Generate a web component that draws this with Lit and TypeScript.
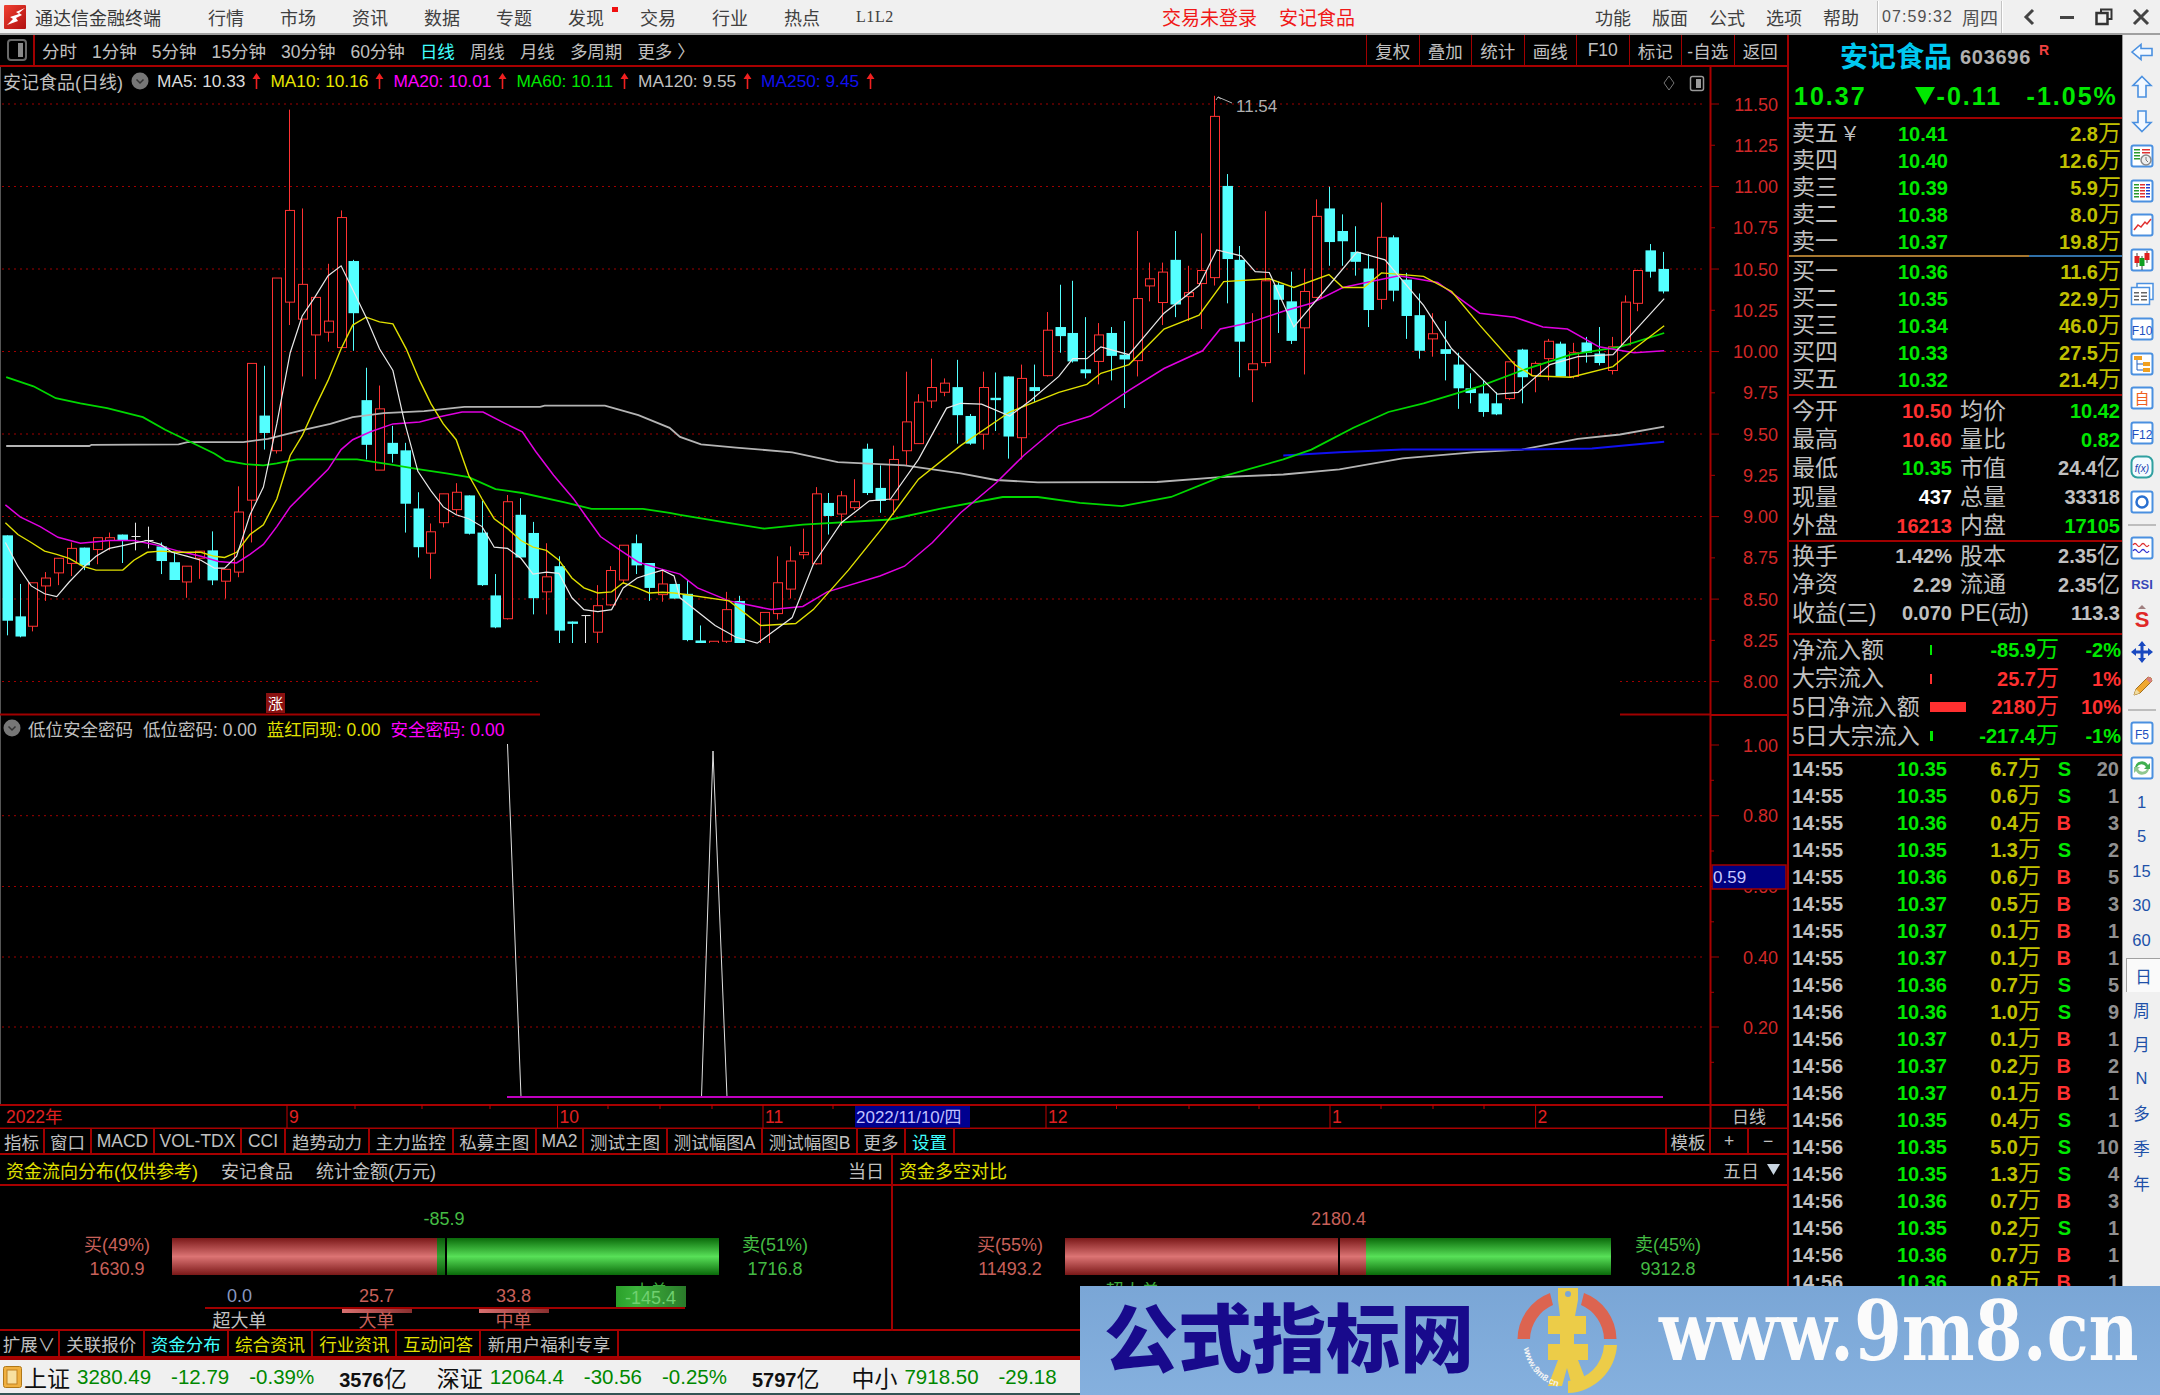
import { LitElement, html, css, svg } from "lit";
import { customElement } from "lit/decorators.js";

type C = [string, number, number, number, number];
const CANDLES: C[] = [
["c",1152,1368,1152,1405],["c",1357,1408,1275,1410],["r",1272,1382,1272,1395],["r",1260,1280,1245,1318],["r",1210,1247,1210,1278],
["r",1185,1223,1170,1255],["c",1183,1228,1183,1240],["r",1158,1188,1158,1225],["r",1158,1165,1145,1190],["c",1150,1165,1150,1222],
["w",1155,1155,1120,1190],["w",1165,1165,1130,1185],["c",1180,1217,1170,1250],["c",1220,1265,1195,1265],["r",1230,1270,1230,1310],
["r",1192,1210,1192,1262],["c",1190,1266,1142,1278],["r",1238,1268,1238,1312],["r",1093,1245,1028,1258],["r",717,1063,717,1170],
["c",849,893,723,935],["r",501,938,501,945],["r",330,562,75,620],["r",517,605,325,750],["r",550,645,550,757],
["r",610,638,465,662],["r",348,677,330,677],["c",458,590,455,685],["c",810,923,728,960],["r",832,987,773,987],
["c",918,946,875,968],["c",937,1072,918,1145],["c",1084,1182,1043,1208],["r",1143,1197,1122,1262],["r",1047,1120,1047,1132],
["r",1043,1087,1020,1100],["c",1051,1148,1051,1150],["c",1145,1278,1065,1280],["c",1304,1385,1250,1387],["r",1067,1363,1050,1365],
["c",1100,1208,1058,1208],["c",1146,1311,1118,1352],["r",1257,1295,1172,1352],["c",1230,1393,1205,1425],["c",1370,1376,1370,1425],
["w",1355,1355,1355,1425],["r",1330,1397,1278,1425],["r",1241,1328,1230,1330],["r",1177,1265,1177,1275],["c",1172,1228,1150,1250],
["c",1222,1285,1222,1318],["r",1275,1302,1240,1320],["c",1275,1312,1275,1312],["c",1300,1417,1265,1420],["c",1418,1440,1380,1440],
["r",1420,1440,1420,1440],["r",1340,1420,1295,1430],["c",1318,1440,1305,1440],["r",1430,1440,1430,1440],["r",1347,1440,1347,1440],
["r",1272,1350,1205,1365],["r",1217,1288,1180,1312],["r",1195,1201,1135,1212],["r",1047,1224,1030,1226],["c",1070,1103,1045,1150],
["r",1052,1098,1040,1128],["r",1067,1082,1010,1088],["c",933,1045,920,1050],["c",1032,1065,975,1095],["r",960,1062,925,1100],
["r",865,938,738,975],["r",815,920,795,920],["r",778,812,705,830],["r",767,790,755,800],["c",777,848,708,920],
["c",850,920,845,923],["r",778,896,738,935],["c",804,810,740,888],["c",750,902,750,958],["r",755,905,720,960],
["c",777,787,720,815],["r",633,748,587,750],["c",625,648,518,690],["c",640,712,508,715],["c",732,742,600,755],
["r",645,712,615,770],["c",640,698,625,760],["c",695,707,610,830],["r",553,710,382,750],["r",503,521,462,560],
["r",486,563,462,620],["c",455,568,382,600],["r",538,548,470,610],["r",482,515,388,630],["r",92,500,40,520],
["c",268,453,238,565],["c",455,662,420,752],["r",718,733,590,815],["r",508,715,332,725],["c",518,556,510,640],
["c",560,660,485,668],["r",535,627,478,745],["r",345,550,302,552],["c",325,410,270,470],["c",382,408,340,470],
["c",435,460,370,495],["c",477,582,440,625],["r",398,555,310,580],["c",398,533,393,560],["c",505,597,488,655],
["c",595,685,540,705],["r",642,655,590,700],["c",681,693,610,760],["c",720,780,690,832],["c",780,792,742,818],
["c",793,840,760,852],["c",818,846,790,848],["r",713,806,713,810],["c",682,752,680,818],["r",717,748,712,790],
["r",661,705,655,760],["c",667,750,662,750],["r",690,750,665,755],["c",664,690,650,715],["c",692,716,625,722],
["r",675,735,650,745],["r",562,670,545,670],["r",482,565,480,585],["c",431,485,415,500],["c",478,535,435,540],
];

const Y = (z: number) => 80 + z / 2.53;
const X = (i: number) => 6.7 + 12.84 * i;
const mk = (a: number[][], b: number[][]) =>
  [...a.filter((p) => p[0] / 2.24 < 680).map((p) => [p[0] / 2.24, Y(p[1])]), ...b.map((p) => [680 + p[0] / 1.4255, Y(p[1])])]
    .map((p) => `${p[0].toFixed(1)},${p[1].toFixed(1)}`)
    .join(" ");

const MA5 = mk(
  [[12,1170],[40,1230],[70,1280],[100,1300],[127,1307],[155,1270],[185,1235],[215,1205],[245,1185],[275,1178],[300,1172],[330,1165],[360,1175],[385,1195],[420,1205],[450,1215],[480,1235],[503,1235],[530,1205],[560,1100],[590,1030],[620,870],[650,690],[677,597],[705,550],[735,495],[764,470],[790,530],[820,600],[850,680],[880,735],[905,860],[936,990],[966,1040],[993,1080],[1022,1100],[1050,1110],[1080,1130],[1107,1182],[1137,1185],[1167,1210],[1194,1250],[1224,1245],[1252,1248],[1281,1310],[1308,1340],[1339,1345],[1370,1340],[1396,1285],[1427,1260],[1454,1250],[1484,1240],[1510,1255]],
  [[0,1310],[50,1380],[80,1410],[110,1425],[160,1360],[190,1225],[230,1120],[270,1065],[300,1060],[340,960],[380,830],[400,818],[430,820],[470,850],[500,810],[540,750],[560,705],[580,705],[600,675],[640,695],[690,590],[740,520],[765,430],[800,445],[820,485],[840,487],[875,625],[925,520],[965,435],[1005,455],[1060,570],[1100,680],[1165,795],[1195,790],[1240,720],[1280,700],[1330,695],[1403,553]]
);
const MA10 = mk(
  [[12,1120],[40,1150],[70,1170],[100,1192],[127,1200],[155,1210],[185,1230],[215,1240],[245,1240],[275,1240],[300,1215],[330,1195],[360,1192],[400,1195],[450,1195],[480,1205],[503,1208],[530,1195],[560,1150],[590,1125],[620,1060],[650,950],[677,900],[705,830],[735,760],[764,680],[790,620],[820,600],[850,612],[880,617],[910,680],[940,760],[966,820],[993,870],[1022,910],[1050,1000],[1080,1060],[1107,1110],[1137,1135],[1167,1165],[1194,1182],[1224,1190],[1252,1215],[1281,1260],[1308,1285],[1339,1298],[1370,1295],[1396,1272],[1427,1285],[1454,1298],[1484,1296],[1510,1298]],
  [[0,1300],[70,1318],[115,1380],[165,1375],[190,1340],[240,1240],[290,1130],[340,1010],[400,925],[470,840],[540,790],[580,770],[600,742],[640,720],[690,630],[740,595],[775,510],[840,503],[875,525],[925,492],[945,525],[975,525],[1000,488],[1060,497],[1100,535],[1140,620],[1190,720],[1215,748],[1270,752],[1330,725],[1360,680],[1403,622]]
);
const MA20 = mk(
  [[12,1075],[45,1105],[90,1130],[130,1157],[180,1172],[245,1165],[300,1165],[345,1175],[400,1192],[450,1205],[490,1218],[530,1222],[560,1200],[590,1175],[620,1130],[650,1080],[690,1035],[735,985],[764,935],[790,910],[830,890],[880,870],[940,865],[985,852],[1035,840],[1082,840],[1130,868],[1170,890],[1200,940],[1240,1000],[1285,1060],[1310,1100],[1345,1155],[1390,1190],[1430,1220],[1480,1237]],
  [[0,1250],[25,1285],[70,1318],[130,1340],[175,1332],[210,1295],[285,1255],[320,1230],[360,1170],[400,1095],[450,1020],[490,950],[540,875],[585,850],[640,785],[690,730],[745,685],[770,630],[810,615],[860,585],[900,565],[945,525],[985,510],[1025,495],[1080,512],[1140,590],[1190,600],[1230,625],[1265,630],[1310,675],[1360,690],[1403,685]]
);
const MA60 = mk(
  [[14,752],[75,775],[125,805],[180,818],[240,830],[320,853],[370,885],[420,912],[480,945],[505,963],[550,972],[590,975],[620,970],[665,960],[800,960],[870,972],[940,985],[1000,995],[1050,1005],[1110,1035],[1170,1045],[1270,1070],[1325,1085],[1440,1085],[1500,1095]],
  [[0,1100],[60,1118],[120,1135],[175,1125],[300,1112],[370,1085],[460,1055],[510,1055],[570,1070],[630,1078],[700,1055],[770,1005],[860,960],[900,935],[960,880],[1010,840],[1060,818],[1140,775],[1200,735],[1270,695],[1340,675],[1403,640]]
);
const MA120 = mk(
  [[14,926],[200,926],[205,923],[400,922],[420,916],[545,916],[600,908],[680,885],[740,870],[790,853],[860,843],[950,838],[1040,827],[1210,827],[1220,824],[1355,824],[1430,848],[1500,880]],
  [[0,903],[30,922],[80,930],[160,942],[225,967],[320,975],[400,995],[450,1012],[510,1018],[680,1017],[770,1005],[860,998],[940,985],[1030,957],[1130,942],[1200,935],[1280,908],[1340,897],[1403,877]]
);
const MA250 = mk([], [[860,950],[940,942],[1030,935],[1190,935],[1300,932],[1403,915]]);

const PRICE_TICKS = ["11.50","11.25","11.00","10.75","10.50","10.25","10.00","9.75","9.50","9.25","9.00","8.75","8.50","8.25","8.00"];
const SUB_TICKS = ["1.00","0.80","0.60","0.40","0.20"];
const DATE_MARKS: [number, string][] = [[287,"9"],[557.5,"10"],[763,"11"],[1046,"12"],[1330,"1"],[1535.6,"2"]];
const DATE_TICKS = [355,422,490,608,660,712,833,1116.5,1189,1259,1381,1433,1484];

const PERIODS = ["分时","1分钟","5分钟","15分钟","30分钟","60分钟","日线","周线","月线","多周期","更多 〉"];
const TOOLS = ["复权","叠加","统计","画线","F10","标记","-自选","返回"];
const MAS: [string, string][] = [["MA5: 10.33","ma-w"],["MA10: 10.16","ma-y"],["MA20: 10.01","ma-m"],["MA60: 10.11","ma-g"],["MA120: 9.55","ma-s"],["MA250: 9.45","ma-b"]];
const TABS1: [string, number, string?][] = [["指标",45],["窗口",47],["MACD",63],["VOL-TDX",87],["CCI",44],["趋势动力",84],["主力监控",83.5],["私募主图",83.5],["MA2",47],["测试主图",84],["测试幅图A",95],["测试幅图B",95],["更多",48],["设置",49,"cy"]];
const TABS2: [string, number, string?][] = [["扩展∨",60],["关联报价",84.7],["资金分布",84,"cy"],["综合资讯",84.5,"ye"],["行业资讯",84,"ye"],["互动问答",83.5,"ye"],["新用户福利专享",138.5]];
const ASKS: [string, string, string][] = [["卖五","10.41","2.8"],["卖四","10.40","12.6"],["卖三","10.39","5.9"],["卖二","10.38","8.0"],["卖一","10.37","19.8"]];
const BIDS: [string, string, string][] = [["买一","10.36","11.6"],["买二","10.35","22.9"],["买三","10.34","46.0"],["买四","10.33","27.5"],["买五","10.32","21.4"]];
type S = [string, string, string, string, string, string, string?];
const STATS1: S[] = [
  ["今开","10.50","re","均价","10.42","gr"],["最高","10.60","re","量比","0.82","gr"],["最低","10.35","gr","市值","24.4","gy","亿"],
  ["现量","437","wh","总量","33318","gy"],["外盘","16213","re","内盘","17105","gr"],
];
const STATS2: S[] = [["换手","1.42%","gy","股本","2.35","gy","亿"],["净资","2.29","gy","流通","2.35","gy","亿"],["收益(三)","0.070","gy","PE(动)","113.3","gy"]];
const FLOWS: [string, number, string, string, string][] = [["净流入额",2,"-85.9","-2%","gr"],["大宗流入",2,"25.7","1%","re"],["5日净流入额",36,"2180","10%","re"],["5日大宗流入",3,"-217.4","-1%","gr"]];
const TRADES = `14:55 10.35 6.7 S 20|14:55 10.35 0.6 S 1|14:55 10.36 0.4 B 3|14:55 10.35 1.3 S 2|14:55 10.36 0.6 B 5|14:55 10.37 0.5 B 3|14:55 10.37 0.1 B 1|14:55 10.37 0.1 B 1|14:56 10.36 0.7 S 5|14:56 10.36 1.0 S 9|14:56 10.37 0.1 B 1|14:56 10.37 0.2 B 2|14:56 10.37 0.1 B 1|14:56 10.35 0.4 S 1|14:56 10.35 5.0 S 10|14:56 10.35 1.3 S 4|14:56 10.36 0.7 B 3|14:56 10.35 0.2 S 1|14:56 10.36 0.7 B 1|14:56 10.36 0.8 B 1`.split("|").map((s) => s.split(" "));

const BLUE = "#4a90e0";
const box = (inner: unknown) => svg`<rect x="1.5" y="1.5" width="21" height="21" rx="2" fill="#fff" stroke=${BLUE} stroke-width="2"></rect>${inner}`;
const bars = (x: number, ys: number[], c: string, w = 5) => ys.map((y) => svg`<rect x=${x} y=${y} width=${w} height="1.5" fill=${c}></rect>`);
const ICONS: unknown[] = [
  svg`<path d="M2 12 L11 4.500 V8.500 H22 V15.500 H11 V19.500 Z" fill="#f4f9ff" stroke=${BLUE} stroke-width="1.600"></path>`,
  svg`<path d="M12 1.500 L21 10.500 H16 V22 H8 V10.500 H3 Z" fill="#f4f9ff" stroke=${BLUE} stroke-width="1.600"></path>`,
  svg`<path d="M12 22.500 L21 13.500 H16 V2 H8 V13.500 H3 Z" fill="#f4f9ff" stroke=${BLUE} stroke-width="1.600"></path>`,
  box(svg`${bars(4,[5,8,11,14],"#2a9a2a",6)}${bars(12,[5,8],"#e03030",8)}<circle cx="16" cy="16" r="5" fill="#eee" stroke="#888" stroke-width="1.500"></circle><path d="M16 13v3l2 2" stroke="#777" fill="none"></path>`),
  box(svg`${bars(4,[5,8,11,14,17],"#2a9a2a")}${bars(10,[5,8,11,14,17],"#e03030")}${bars(16,[5,8,11,14,17],"#2040d0",4)}`),
  box(svg`<path d="M4 17 L8 12 L11 14 L15 9 L17 11 L21 6" fill="none" stroke="#e03030" stroke-width="1.500"></path>`),
  box(svg`<path d="M7 5v14M12 8v14M17 3v12" stroke="#444" stroke-width="1"></path><rect x="4.500" y="8" width="5" height="7" fill="#e02020"></rect><rect x="9.500" y="10" width="5" height="8" fill="#10a020"></rect><rect x="14.500" y="5" width="5" height="7" fill="#e02020"></rect>`),
  svg`<rect x="7" y="1.500" width="16" height="16" fill="#fff" stroke=${BLUE} stroke-width="1.500"></rect><rect x="1.500" y="5.500" width="18" height="17" fill="#fff" stroke=${BLUE} stroke-width="1.500"></rect>${bars(4,[10,13.500,17],"#666",5)}${bars(11,[10,13.500,17],"#666",6)}`,
  box(svg`<text class="ic-t" x="12" y="17.500" text-anchor="middle" fill="#2050c0">F10</text>`),
  box(svg`<rect x="4" y="4" width="8" height="4" fill="#f0a020"></rect><rect x="13" y="10" width="7" height="4" fill="#f0a020"></rect><rect x="13" y="16" width="7" height="4" fill="#f0a020"></rect><path d="M7 8v10h6M7 12h6" fill="none" stroke="#2060c0"></path>`),
  box(svg`<text class="ic-c" x="12" y="18" text-anchor="middle" fill="#f06020">自</text>`),
  box(svg`<text class="ic-t" x="12" y="17.500" text-anchor="middle" fill="#2050c0">F12</text>`),
  svg`<rect x="1.500" y="1.500" width="21" height="21" rx="6" fill="#f4fbff" stroke="#30a0a0" stroke-width="2"></rect><text class="ic-f" x="12" y="17" text-anchor="middle" fill="#2040b0">f(x)</text>`,
  box(svg`<circle cx="12" cy="12" r="5.500" fill="none" stroke="#2a70d0" stroke-width="2.500"></circle>`),
  null,
  box(svg`<path d="M3 9 q2-3 4 0 t4 0 t4 0 t4 0" fill="none" stroke="#e03030" stroke-width="1.300"></path><path d="M3 15 q2-3 4 0 t4 0 t4 0 t4 0" fill="none" stroke="#3030d0" stroke-width="1.300"></path>`),
  svg`<text class="ic-r" x="12" y="17.500" text-anchor="middle" fill="#3848b8">RSI</text>`,
  svg`<path d="M12 0 L16 4 H8 Z" fill="#a08080"></path><text class="ic-s" x="12" y="22" text-anchor="middle" fill="#e02828">S</text>`,
  svg`<path d="M12 1 L16 6 H13.500 V10.500 H18 V8 L23 12 L18 16 V13.500 H13.500 V18 H16 L12 23 L8 18 H10.500 V13.500 H6 V16 L1 12 L6 8 V10.500 H10.500 V6 H8 Z" fill="#1848c0"></path>`,
  svg`<path d="M4 20 L6 14 L18 2 Q22 2 22 6 L10 18 Z" fill="#f0a830" stroke="#a07020"></path><path d="M4 20 L6 14 L10 18 Z" fill="#f0dca0"></path><path d="M18 2 Q22 2 22 6 L20 8 L16 4 Z" fill="#d88080"></path>`,
  null,
  box(svg`<text class="ic-t" x="12" y="17.500" text-anchor="middle" fill="#2050c0">F5</text>`),
  box(svg`<path d="M5 11 A7 7 0 0 1 18 9 L20 7 V13 H14 L16 11 A5 5 0 0 0 7 11 Z" fill="#40b050"></path><path d="M19 13 A7 7 0 0 1 6 15 L4 17 V11 H10 L8 13 A5 5 0 0 0 17 13 Z" fill="#90c890"></path>`),
];
const NAV = ["1","5","15","30","60","日","周","月","N","多","季","年"];

@customElement("app-root")
export class AppRoot extends LitElement {
  static styles = css`
    :host { display: block; width: 2160px; height: 1395px; overflow: hidden; background: #000; }
    * { box-sizing: border-box; }
    .app { position: relative; width: 2160px; height: 1395px; display: flex; flex-direction: column; font-family: "Liberation Sans", "Noto Sans CJK SC", sans-serif; }
    .top { height: 35px; flex: none; background: #f0f0f0; border-bottom: 2px solid #a0a0a0; display: flex; align-items: center; color: #404040; font-size: 18px; white-space: nowrap; padding-left: 4px; }
    .logo { width: 22px; height: 24px; flex: none; margin-right: 9px; }
    .brand { width: 126px; color: #383838; }
    .menu { display: flex; align-items: center; gap: 36px; margin-left: 47px; }
    .menu span { position: relative; width: 36px; }
    .menu .l12 { font-family: "Liberation Serif", serif; font-size: 16px; letter-spacing: 0.6px; }
    .dot { position: absolute; left: 44px; top: 3px; width: 6px; height: 5px; background: #f01010; }
    .alert { margin-left: 270px; display: flex; gap: 22px; color: #f01818; font-size: 19px; }
    .sys { margin-left: auto; display: flex; gap: 21px; }
    .vsep { width: 2px; height: 32px; background: #c4c4c4; border-right: 1px solid #fff; flex: none; }
    .clock { display: flex; align-items: center; gap: 9px; font-size: 16px; letter-spacing: 1.100px; margin: 0 3px 0 3px; color: #505050; }
    .clock b { font-weight: 400; font-size: 18px; letter-spacing: 0; }
    .win { display: flex; width: 157px; justify-content: space-around; padding: 0 1px 0 9px; }
    .win svg { width: 20px; height: 20px; }
    .main { flex: 1; display: flex; min-height: 0; }
    .left { width: 1787px; flex: none; display: flex; flex-direction: column; }
    .bar { height: 32px; flex: none; display: flex; align-items: center; border-bottom: 2px solid #a80000; color: #c0c0c0; font-size: 17.500px; white-space: nowrap; }
    .tog { width: 35px; height: 30px; flex: none; border-right: 2px solid #a00000; display: flex; align-items: center; justify-content: center; }
    .periods { display: flex; gap: 15px; padding-left: 7px; }
    .periods .on { color: #40ffff; }
    .tools { margin-left: auto; display: flex; height: 100%; padding-right: 1px; }
    .tools span { width: 52.5px; border-left: 1px solid #a00000; display: flex; align-items: center; justify-content: center; }
    .chart { position: relative; height: 1062px; flex: none; }
    .chart > svg { display: block; width: 1787px; height: 1062px; }
    .chart text { font-family: "Liberation Sans", "Noto Sans CJK SC", sans-serif; }
    .ax { font-size: 18px; fill: #d02828; text-anchor: end; }
    .mk { font-size: 17px; fill: #b0b0b0; }
    .dt { font-size: 17.500px; fill: #e02020; }
    .dt2 { font-size: 17px; fill: #c0c0ff; }
    .dl { font-size: 17px; fill: #c0c0c0; text-anchor: middle; }
    .bd { font-size: 15px; fill: #fff; text-anchor: middle; }
    .sub { font-size: 17px; fill: #c8c8ff; }
    .legend { position: absolute; left: 4px; display: flex; align-items: center; color: #c0c0c0; white-space: nowrap; }
    .l1 { top: 3px; height: 22px; font-size: 18px; left: 3px; }
    .l2 { top: 650px; height: 22px; left: 3px; font-size: 17.500px; }
    .dd { width: 18px; height: 18px; flex: none; }
    .l1 .dd { margin: 0 8px 0 8px; }
    .l2 .dd { margin-right: 7px; }
    .ma { display: flex; align-items: center; gap: 7px; margin-right: 9px; font-size: 17.300px; }
    .ma svg { width: 9px; height: 18px; }
    .ma-w { color: #dcdcdc; } .ma-y { color: #e6e600; } .ma-m { color: #ff00ff; } .ma-g { color: #00e800; } .ma-s { color: #c0c0c0; } .ma-b { color: #1010f0; }
    .mgap { margin-left: 10px; }
    .tabs { display: flex; flex: none; height: 26px; border-bottom: 2px solid #a80000; color: #c0c0c0; font-size: 17.500px; white-space: nowrap; }
    .tabs.b { height: 27px; }
    .tab { height: 100%; border-right: 2px solid #a00000; display: flex; align-items: center; justify-content: center; flex: none; overflow: hidden; }
    .cy { color: #40ffff; } .ye { color: #e0e000; }
    .tabs .end { margin-left: auto; display: flex; height: 100%; }
    .tabs .end .tab:first-child { border-left: 2px solid #a00000; }
    .tabs .end .tab:last-child { border-right: 0; }
    .fund { display: flex; flex: 1; min-height: 0; }
    .fp { display: flex; flex-direction: column; flex: none; }
    .fp.a { width: 893px; border-right: 2px solid #a00000; }
    .fp.z { flex: 1; }
    .fh { height: 31px; flex: none; display: flex; align-items: center; gap: 23px; padding: 0 7px 0 6px; border-bottom: 2px solid #a80000; color: #c0c0c0; font-size: 18px; white-space: nowrap; }
    .fh .r { margin-left: auto; display: flex; align-items: center; gap: 8px; }
    .fb { flex: 1; border-bottom: 2px solid #a80000; overflow: hidden; font-size: 18px; padding-top: 22px; color: #c0c0c0; white-space: nowrap; }
    .net { height: 22px; line-height: 22px; text-align: center; width: 100%; }
    .gn { color: #44bb44; } .rd { color: #c8605a; }
    .brow { display: flex; margin-top: 8px; height: 37px; }
    .side { width: 172px; flex: none; display: flex; flex-direction: column; justify-content: center; align-items: center; line-height: 24px; }
    .side.lf { padding-left: 62px; }
    .side.rg { width: 112px; }
    .fbar { width: 547px; flex: none; display: flex; }
    .seg-r { background: linear-gradient(#7a1818, #dc7474 50%, #7a1818); }
    .seg-g { background: linear-gradient(#0a6a0a, #58e058 50%, #0a6a0a); }
    .seg-d { background: linear-gradient(#0a5a0a, #36a836 50%, #0a5a0a); }
    .cut { width: 2px; background: #000; flex: none; }
    .vals, .labs { display: grid; grid-template-columns: repeat(4, 137px); margin-left: 171px; text-align: center; }
    .vals { height: 25px; margin-top: 7px; align-items: end; line-height: 21px; }
    .rule { height: 2px; margin-left: 205px; width: 480px; background: #a00000; }
    .labs { line-height: 16px; }
    .blk { display: flex; flex-direction: column; align-items: center; }
    .tip { height: 4px; overflow: hidden; line-height: 19px; color: #3ba83b; font-size: 17px; }
    .tip.hd { align-self: start; font-size: 18px; }
    .gblk { width: 70px; height: 21px; padding-top: 3px; background: linear-gradient(90deg, #2aa02a, #3cb43c 30%, #2a7a2a); line-height: 18px; color: #70d070; }
    .sb { width: 70px; height: 4px; margin: 0 auto; background: linear-gradient(90deg, #d87070, #8a3030); }
    .nb { height: 4px; }
    .bl { color: #8898c0; }
    .rp { width: 336px; flex: none; border-left: 2px solid #a00000; border-right: 1px solid #999; display: flex; flex-direction: column; overflow: hidden; white-space: nowrap; color: #c0c0c0; }
    .rt { height: 40px; flex: none; display: flex; align-items: center; padding-left: 51px; }
    .rt b { font-size: 28px; color: #00c8f0; font-weight: 700; margin-right: 8px; }
    .rt i { font-style: normal; font-weight: 700; font-size: 20px; letter-spacing: 0.700px; color: #b0b0b0; margin-top: 4px; }
    .rt em { font-style: normal; font-weight: 700; font-size: 14px; color: #f04040; margin: -10px 0 0 8px; }
    .rq { height: 44px; flex: none; border-bottom: 2px solid #a00000; display: flex; align-items: center; font-weight: 700; color: #00e800; font-size: 25px; letter-spacing: 2px; padding-left: 5px; }
    .rq span:nth-child(2) { margin-left: 48px; width: 108px; display: flex; align-items: center; gap: 2px; }
    .rq span:nth-child(3) { margin-left: 4px; }
    .rq svg { width: 20px; height: 18px; flex: none; }
    .rows { flex: none; }
    .rows.hr { border-bottom: 2px solid #a00000; }
    .p1 { padding-top: 1px; }
    .pb1 { padding-bottom: 1px; }
    .row { height: 27px; display: grid; align-items: center; padding-left: 3px; }
    .q { grid-template-columns: 104px 52px 173px; }
    .lab { font-size: 23px; color: #c0c0c0; line-height: 27px; }
    .num { font-weight: 700; font-size: 20px; line-height: 22px; text-align: right; }
    .gr { color: #00e800; } .re { color: #ff3030; } .yl { color: #c0c000; } .gy { color: #c0c0c0; } .wh { color: #fff; }
    .u { font-size: 23px; font-weight: 400; line-height: 0; }
    .midl { height: 2px; flex: none; background: linear-gradient(90deg, #a87830 72%, #3070a8 72%); }
    .yen { font-size: 20px; margin-left: 2px; }
    .s { height: 28.600px; grid-template-columns: 85px 75px 8px 78px 82px; }
    .s3 { padding-bottom: 5px; }
    .f { height: 28.700px; grid-template-columns: 138px 40px 89px 62px; }
    .tick { height: 10px; display: block; background: currentColor; }
    .flow4 { padding-top: 1px; padding-bottom: 3px; }
    .trades { flex: none; height: 531px; overflow: hidden; }
    .tr { grid-template-columns: 58px 97px 94px 30px 48px; font-weight: 700; font-size: 20px; line-height: 22px; }
    .tr .n { text-align: right; }
    .tr .cnt { color: #909090; text-align: right; }
    .tr .t { color: #c0c0c0; }
    .side-r { flex: 1; background: #f0f0f0; display: flex; flex-direction: column; overflow: hidden; }
    .ic { height: 34.600px; flex: none; display: flex; align-items: center; justify-content: center; }
    .ic svg { width: 24px; height: 24px; overflow: visible; }
    .ic-t { font-size: 12px; font-family: "Liberation Sans", sans-serif; }
    .ic-c { font-size: 15px; font-family: "Noto Sans CJK SC", sans-serif; }
    .ic-f { font-size: 10px; font-style: italic; font-family: "Liberation Sans", sans-serif; }
    .ic-r { font-size: 13px; font-weight: 700; font-family: "Liberation Sans", sans-serif; }
    .ic-s { font-size: 22px; font-weight: 700; font-family: "Liberation Sans", sans-serif; }
    .hs { height: 11.700px; flex: none; display: flex; align-items: center; justify-content: center; }
    .hs i { width: 28px; height: 2px; background: #bdbdbd; display: block; }
    .nv { height: 34.600px; flex: none; display: flex; align-items: center; justify-content: center; color: #2050a8; font-size: 16.500px; }
    .nv.on { background: #fafafa; margin-left: 3px; border-top: 1px solid #a0a0a0; border-left: 1px solid #a0a0a0; }
    .status { height: 37px; flex: none; background: #f0f0f0; border-top: 2px solid #a00000; border-bottom: 2px solid #355; display: flex; align-items: center; gap: 20px; padding-left: 3px; white-space: nowrap; font-size: 20.500px; color: #101010; }
    .status i { font-style: normal; font-size: 23px; margin-right: -13px; }
    .status .m1 { margin-left: 10px; }
    .status .m2 { margin-left: 12px; }
    .status .g { color: #008800; }
    .status .k { font-weight: 700; color: #111; font-size: 20px; margin-left: 5px; }
    .status .k em { font-style: normal; font-weight: 400; font-size: 23px; }
    .sico { width: 19px; height: 22px; margin-right: -18px; flex: none; }
    .banner { position: absolute; left: 1080px; top: 1286px; width: 1080px; height: 109px; background: linear-gradient(#7aa6d6, #85b0de); white-space: nowrap; overflow: hidden; }
    .bzh { position: absolute; left: 24px; top: -2px; font-family: "Noto Sans CJK SC", sans-serif; font-weight: 900; font-size: 74px; line-height: 100px; color: #180a8c; }
    .ben { position: absolute; left: 579px; top: -5px; font-family: "DejaVu Serif", serif; font-weight: 700; font-size: 82px; line-height: 100px; color: #fbfbfb; transform: scaleX(0.84); transform-origin: left; }
    .blogo { position: absolute; left: 432px; top: 0; width: 110px; height: 109px; }
    .blogo text { font-family: "Liberation Sans", sans-serif; font-size: 9px; font-weight: 700; fill: #f4f4f4; }
  `;

  private chart() {
    const gy = [104, 186.5, 269, 351.5, 434, 516.5, 599];
    const subY = [745, 815.7, 886.5, 957, 1027];
    return svg`<svg viewBox="0 67 1787 1062" xmlns="http://www.w3.org/2000/svg">
      <defs><clipPath id="cc"><rect x="0" y="67" width="1710" height="576"></rect></clipPath></defs>
      <rect x="0" y="67" width="1787" height="1062" fill="#000"></rect>
      <rect x="0" y="67" width="1" height="1038" fill="#555"></rect>
      ${[...gy, 815.7, 886.5, 957, 1027].map((y) => svg`<line x1="2" x2="1706" y1=${y} y2=${y} stroke="#a00000" stroke-dasharray="2 4"></line>`)}
      <line x1="2" x2="538" y1="681.5" y2="681.5" stroke="#a00000" stroke-dasharray="2 4"></line>
      <line x1="1620" x2="1706" y1="681.5" y2="681.5" stroke="#a00000" stroke-dasharray="2 4"></line>
      <g clip-path="url(#cc)">
        ${CANDLES.map((c, i) => {
          const x = Math.round(X(i)) + 0.5;
          const col = c[0] === "r" ? "#ff3232" : c[0] === "c" ? "#54ffff" : "#e8e8e8";
          const t = Y(c[1]), b = Y(c[2]);
          return svg`<line x1=${x} x2=${x} y1=${Y(c[3])} y2=${Y(c[4])} stroke=${col}></line>
            ${c[0] === "w"
              ? svg`<line x1=${x - 4} x2=${x + 5} y1=${t} y2=${t} stroke=${col}></line>`
              : c[0] === "r"
              ? svg`<rect x=${x - 4} y=${t} width="9" height=${Math.max(b - t, 1)} fill="#000" stroke=${col}></rect>`
              : svg`<rect x=${x - 5} y=${t} width="10.500" height=${Math.max(b - t, 2)} fill=${col}></rect>`}`;
        })}
      </g>
      <polyline points=${MA120} fill="none" stroke="#b4b4b4" stroke-width="1.800"></polyline>
      <polyline points=${MA250} fill="none" stroke="#1010f0" stroke-width="2"></polyline>
      <polyline points=${MA60} fill="none" stroke="#00d800" stroke-width="1.800"></polyline>
      <polyline points=${MA20} fill="none" stroke="#e000e0" stroke-width="1.500"></polyline>
      <polyline points=${MA10} fill="none" stroke="#e0e000" stroke-width="1.400"></polyline>
      <polyline points=${MA5} fill="none" stroke="#e8e8e8" stroke-width="1.200"></polyline>
      <path d="M1218 97 L1216 100 M1218 97 L1221 99 M1218 97 L1232 103" fill="none" stroke="#b0b0b0"></path>
      <text class="mk" x="1236" y="112">11.54</text>
      <rect x="266" y="693" width="19" height="20" fill="#8a1010"></rect>
      <text class="bd" x="275.500" y="709">涨</text>
      <rect x="0" y="713.500" width="540" height="2" fill="#a00000"></rect>
      <rect x="1620" y="713.500" width="91" height="2" fill="#a00000"></rect>
      <path d="M507.500 744 L521 1097" stroke="#e0e0e0" fill="none"></path>
      <path d="M701.500 1097 L713 751 L727 1097" stroke="#e0e0e0" fill="none"></path>
      <line x1="507" x2="1663" y1="1097" y2="1097" stroke="#c000c0" stroke-width="2"></line>

      <path d="M1664 83 L1669 76 L1674 83 L1669 90 Z" fill="none" stroke="#777"></path>
      <rect x="1690.500" y="76.500" width="13" height="14" rx="2" fill="none" stroke="#999" stroke-width="1.500"></rect>
      <rect x="1696" y="79" width="5" height="9" fill="#999"></rect>

      <rect x="1709.500" y="67" width="2" height="1062" fill="#a80000"></rect>
      <rect x="1711" y="714" width="76" height="2" fill="#a80000"></rect>
      ${PRICE_TICKS.map((t, i) => {
        const y = 104 + i * 41.26;
        return svg`<line x1="1711" x2=${i % 2 ? 1715 : 1719} y1=${y} y2=${y} stroke="#a80000"></line>
          <text class="ax" x="1778" y=${y + 6.500}>${t}</text>`;
      })}
      ${SUB_TICKS.map((t, i) => svg`<line x1="1711" x2="1719" y1=${subY[i]} y2=${subY[i]} stroke="#a80000"></line>
          <line x1="1711" x2="1714" y1=${subY[i] + 35.300} y2=${subY[i] + 35.300} stroke="#a80000"></line>
          <text class="ax" x="1778" y=${subY[i] + 6.500}>${t}</text>`)}
      <rect x="1712" y="865" width="74" height="24" fill="#000080" stroke="#a00000" stroke-width="1.500"></rect>
      <text class="sub" x="1713" y="883">0.59</text>

      <rect x="0" y="1104" width="1787" height="2" fill="#a80000"></rect>
      <rect x="0" y="1127.500" width="1787" height="2" fill="#a80000"></rect>
      <text class="dt" x="6" y="1123">2022年</text>
      ${DATE_MARKS.map(([x, l]) => svg`<line x1=${x} x2=${x} y1="1105" y2="1128" stroke="#c00000"></line><text class="dt" x=${x + 2} y="1123">${l}</text>`)}
      ${DATE_TICKS.map((x) => svg`<line x1=${x} x2=${x} y1="1105" y2="1109" stroke="#c00000"></line>`)}
      <rect x="855" y="1106" width="115" height="21.500" fill="#000090"></rect>
      <text class="dt2" x="856" y="1123">2022/11/10/四</text>
      <text class="dl" x="1749" y="1123">日线</text>
    </svg>`;
  }

  private fundP(net: string, netCls: string, sl: string, sv: string, sr: string, srv: string, left: number, divAt: number, right: number, netAt: number, cols: unknown) {
    return html`<div class="fb">
      <div class="net ${netCls}" style="padding-right:${893 - netAt * 2}px">${net}</div>
      <div class="brow">
        <div class="side rd lf"><span>${sl}</span><span>${sv}</span></div>
        <div class="fbar">
          ${divAt < left
            ? html`<div class="seg-r" style="width:${divAt}px"></div><div class="cut"></div><div class="seg-r" style="width:${left - divAt - 2}px"></div><div class="seg-g" style="width:${right}px"></div>`
            : html`<div class="seg-r" style="width:${left}px"></div><div class="seg-d" style="width:${divAt - left}px"></div><div class="cut"></div><div class="seg-g" style="width:${right}px"></div>`}
        </div>
        <div class="side rg gn"><span>${sr}</span><span>${srv}</span></div>
      </div>
      ${cols}
    </div>`;
  }

  private tab(t: [string, number, string?]) {
    return html`<span class="tab ${t[2] ?? ""}" style="width:${t[1]}px">${t[0]}</span>`;
  }

  private stat(r: S) {
    return html`<div class="row s"><span class="lab">${r[0]}</span><span class="num ${r[2]}">${r[1]}</span><span></span><span class="lab">${r[3]}</span><span class="num ${r[5]}">${r[4]}${r[6] ? html`<span class="u">${r[6]}</span>` : ""}</span></div>`;
  }

  render() {
    const up = html`<svg viewBox="0 0 9 18"><path d="M4.500 1 L8.500 7 H5.300 V17 H3.700 V7 H0.500 Z" fill="#f02020"></path></svg>`;
    const dd = html`<svg class="dd" viewBox="0 0 18 18"><circle cx="9" cy="9" r="8.500" fill="#777"></circle><path d="M5.500 7.500 L9 11 L12.500 7.500" fill="none" stroke="#333" stroke-width="1.500"></path></svg>`;
    return html`<div class="app">
      <header class="top">
        <svg class="logo" viewBox="0 0 22 24"><defs><linearGradient id="lg" x1="0" y1="0" x2="1" y2="1"><stop offset="0" stop-color="#f04030"></stop><stop offset="1" stop-color="#b01010"></stop></linearGradient></defs><rect width="22" height="24" rx="1" fill="url(#lg)"></rect><path d="M21 3 L12 7 L15 9 L6 12 L9 14 L3 20 L14 16 L12 13 L18 10 L15 8 Z" fill="#fff"></path></svg>
        <span class="brand">通达信金融终端</span>
        <nav class="menu">
          <span>行情</span><span>市场</span><span>资讯</span><span>数据</span><span>专题</span><span>发现<i class="dot"></i></span><span>交易</span><span>行业</span><span>热点</span><span class="l12">L1L2</span>
        </nav>
        <div class="alert"><span>交易未登录</span><span>安记食品</span></div>
        <div class="sys"><span>功能</span><span>版面</span><span>公式</span><span>选项</span><span>帮助</span></div>
        <i class="vsep" style="margin-left:18px"></i>
        <div class="clock"><span>07:59:32</span><b>周四</b></div>
        <i class="vsep"></i>
        <div class="win">
          <svg viewBox="0 0 20 20"><path d="M13 3 L6 10 L13 17" fill="none" stroke="#444" stroke-width="3"></path></svg>
          <svg viewBox="0 0 20 20"><rect x="3" y="9" width="14" height="3" fill="#444"></rect></svg>
          <svg viewBox="0 0 20 20"><path d="M7 5 V2.500 H17.500 V12 H14" fill="none" stroke="#333" stroke-width="2"></path><rect x="2.500" y="6" width="11" height="11" fill="none" stroke="#333" stroke-width="2.500"></rect></svg>
          <svg viewBox="0 0 20 20"><path d="M3 3 L17 17 M17 3 L3 17" stroke="#444" stroke-width="3"></path></svg>
        </div>
      </header>
      <div class="main">
        <section class="left">
          <div class="bar">
            <div class="tog"><svg width="20" height="22" viewBox="0 0 20 22"><rect x="1" y="1" width="18" height="20" rx="3" fill="none" stroke="#6a6a6a" stroke-width="2"></rect><rect x="11" y="4" width="5" height="14" fill="#8a8a8a"></rect></svg></div>
            <div class="periods">${PERIODS.map((p) => html`<span class=${p === "日线" ? "on" : ""}>${p}</span>`)}</div>
            <div class="tools">${TOOLS.map((t) => html`<span>${t}</span>`)}</div>
          </div>
          <div class="chart">
            ${this.chart()}
            <div class="legend l1"><span>安记食品(日线)</span>${dd}
              ${MAS.map((m) => html`<span class="ma"><span class=${m[1]}>${m[0]}</span>${up}</span>`)}
            </div>
            <div class="legend l2">${dd}<span>低位安全密码</span><span class="mgap">低位密码: 0.00</span><span class="mgap ye">蓝红同现: 0.00</span><span class="mgap ma-m">安全密码: 0.00</span></div>
          </div>
          <div class="tabs">
            ${TABS1.map((t) => this.tab(t))}
            <div class="end">${this.tab(["模板", 46])}${this.tab(["+", 38])}${this.tab(["−", 38])}</div>
          </div>
          <div class="fund">
            <div class="fp a">
              <div class="fh"><span class="ye">资金流向分布(仅供参考)</span><span>安记食品</span><span>统计金额(万元)</span><span class="r">当日</span></div>
              ${this.fundP("-85.9","gn","买(49%)","1630.9","卖(51%)","1716.8",266,274,273,445, html`
                <div class="vals"><span class="bl">0.0</span><span class="rd">25.7</span><span class="rd">33.8</span>
                  <span class="blk"><span class="tip">小单</span><span class="gblk">-145.4</span></span></div>
                <div class="rule"></div>
                <div class="labs"><span><div class="nb"></div>超大单</span><span class="rd"><div class="sb"></div>大单</span><span class="rd"><div class="sb"></div>中单</span><span></span></div>`)}
            </div>
            <div class="fp z">
              <div class="fh"><span class="ye">资金多空对比</span><span class="r">五日 <svg width="13" height="11" viewBox="0 0 13 11"><path d="M0 0 H13 L6.500 11 Z" fill="#c8d4e0"></path></svg></span></div>
              ${this.fundP("2180.4","rd","买(55%)","11493.2","卖(45%)","9312.8",301,273,245,445, html`
                <div class="vals"><span class="tip hd">超大单</span></div>`)}
            </div>
          </div>
          <div class="tabs b">${TABS2.map((t) => this.tab(t))}</div>
        </section>
        <aside class="rp">
          <div class="rt"><b>安记食品</b><i>603696</i><em>R</em></div>
          <div class="rq"><span>10.37</span><span><svg viewBox="0 0 20 18"><path d="M0 0 H20 L10 18 Z" fill="#00e800"></path></svg>-0.11</span><span>-1.05%</span></div>
          <div class="rows p1">
            ${ASKS.map((r, i) => html`<div class="row q"><span class="lab">${r[0]}${i === 0 ? html`<span class="yen">￥</span>` : ""}</span><span class="num gr">${r[1]}</span><span class="num yl">${r[2]}<span class="u">万</span></span></div>`)}
          </div>
          <div class="midl"></div>
          <div class="rows hr p1 pb1">
            ${BIDS.map((r) => html`<div class="row q"><span class="lab">${r[0]}</span><span class="num gr">${r[1]}</span><span class="num yl">${r[2]}<span class="u">万</span></span></div>`)}
          </div>
          <div class="rows hr p1">${STATS1.map((r) => this.stat(r))}</div>
          <div class="rows hr s3">${STATS2.map((r) => this.stat(r))}</div>
          <div class="rows hr flow4">
            ${FLOWS.map((r) => html`<div class="row f"><span class="lab">${r[0]}</span><span><i class="tick ${r[4]}" style="width:${r[1]}px"></i></span><span class="num ${r[4]}">${r[2]}<span class="u">万</span></span><span class="num ${r[4]}">${r[3]}</span></div>`)}
          </div>
          <div class="rows trades">
            ${TRADES.map((r) => html`<div class="row tr"><span class="t">${r[0]}</span><span class="n gr">${r[1]}</span><span class="n yl">${r[2]}<span class="u">万</span></span><span class="n ${r[3] === "S" ? "gr" : "re"}">${r[3]}</span><span class="cnt">${r[4]}</span></div>`)}
          </div>
        </aside>
        <nav class="side-r">
          ${ICONS.map((ic) => ic === null ? html`<div class="hs"><i></i></div>` : html`<div class="ic"><svg viewBox="0 0 24 24">${ic}</svg></div>`)}
          ${NAV.map((n) => html`<div class="nv ${n === "日" ? "on" : ""}">${n}</div>`)}
        </nav>
      </div>
      <footer class="status">
        <svg class="sico" viewBox="0 0 19 22"><rect x="0.500" y="0.500" width="18" height="21" rx="2" fill="#f0b040" stroke="#b07818"></rect><rect x="4" y="4" width="10" height="14" fill="#f8e0a0" stroke="#c08020"></rect></svg>
        <i>上证</i><span class="g">3280.49</span><span class="g">-12.79</span><span class="g">-0.39%</span><span class="k">3576<em>亿</em></span>
        <i class="m1">深证</i><span class="g">12064.4</span><span class="g">-30.56</span><span class="g">-0.25%</span><span class="k">5797<em>亿</em></span>
        <i class="m2">中小</i><span class="g">7918.50</span><span class="g">-29.18</span>
      </footer>
      <div class="banner">
        <div class="bzh">公式指标网</div>
        <svg class="blogo" viewBox="0 0 110 109">
          <defs><path id="ta" d="M12 62 A46 46 0 0 0 62 102"></path></defs>
          <path d="M5.500 53 A50 50 0 0 1 38 7 L41 19 A38 38 0 0 0 18 53 Z" fill="#dc6450"></path>
          <path d="M104.500 53 A50 50 0 0 0 72 7 L69 19 A38 38 0 0 1 92 53 Z" fill="#dc6450"></path>
          <path d="M105 59 A51 51 0 0 1 56 107 L56 95 A38 38 0 0 0 92 59 Z" fill="#eccc48"></path>
          <path d="M46 2 H66 V14 L63 30 H74 V48 H62 V58 H76 V74 H66 L76 100 H60 L55 82 L50 100 H36 L46 74 H36 V58 H48 V48 H36 V30 H48 L46 14 Z" fill="#eccc48"></path>
          <circle cx="56" cy="8" r="3" fill="#7aa6d6"></circle>
          <text><textPath href="#ta">www.9m8.cn</textPath></text>
        </svg>
        <div class="ben">www.9m8.cn</div>
      </div>
    </div>`;
  }
}
